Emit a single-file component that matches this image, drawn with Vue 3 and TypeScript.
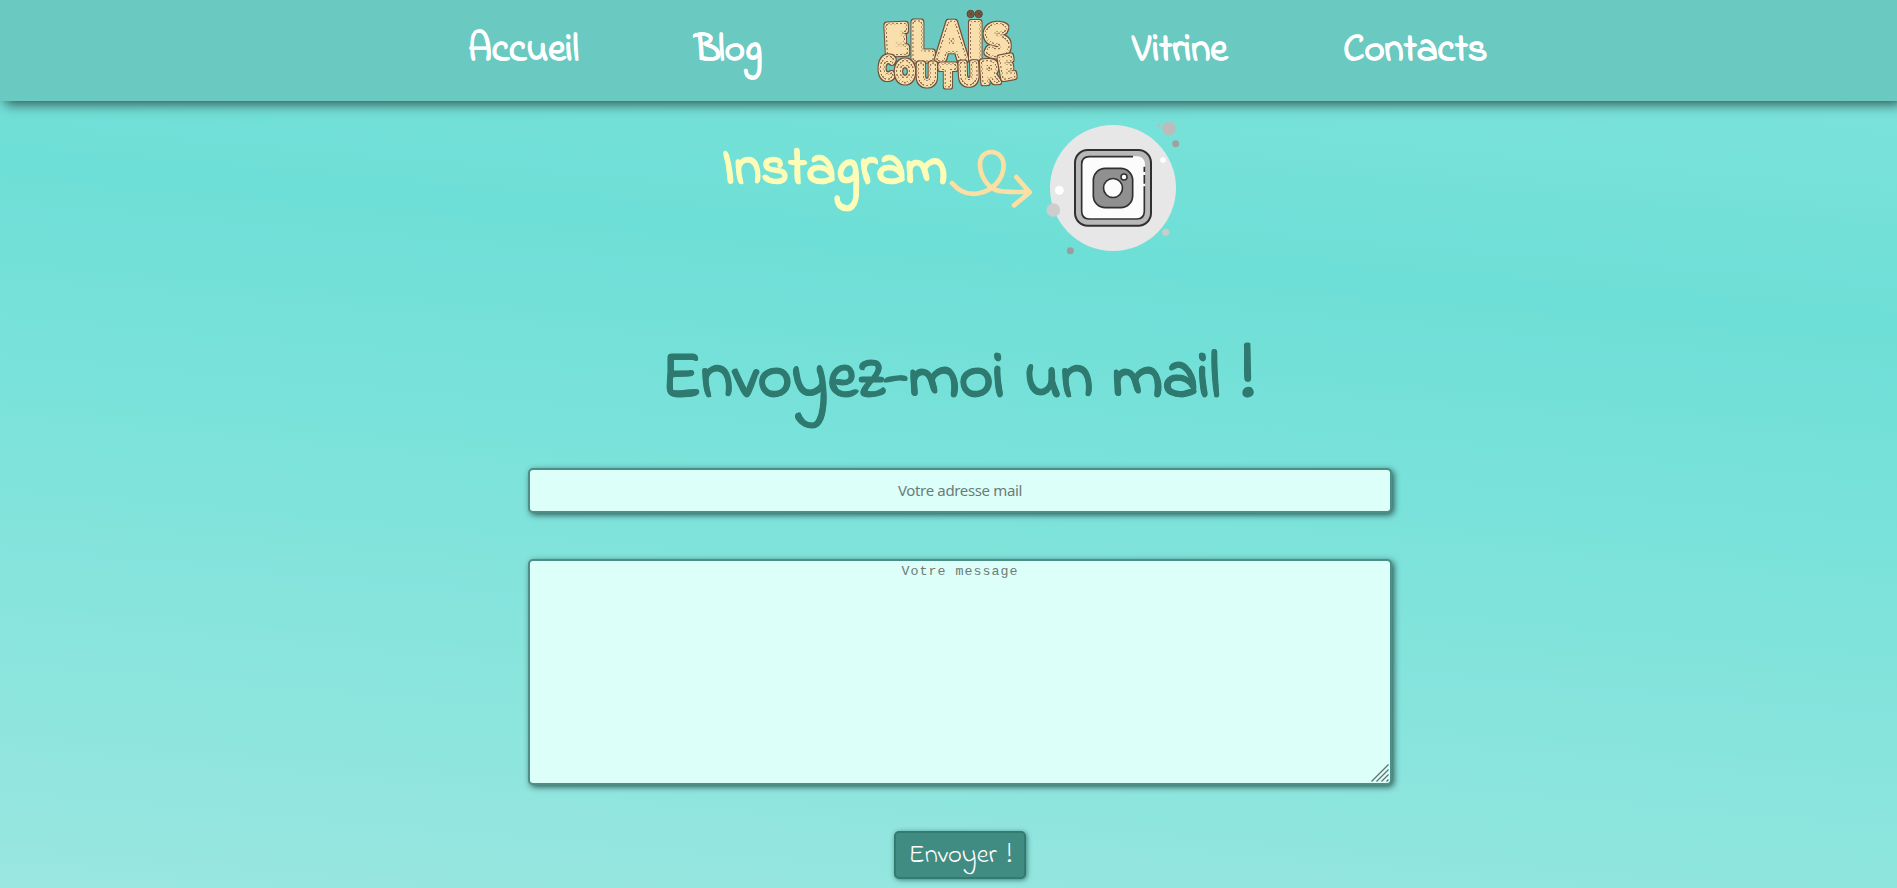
<script setup lang="ts">
interface Letter {
  ch: string
  x: number
  y: number
  w: number
  size: number
  rot: number
  edge: number
}

const leftLinks: string[] = ['Accueil', 'Blog']
const rightLinks: string[] = ['Vitrine', 'Contacts']

const letters: Letter[] = [
  { ch: 'E', x: 106, y: 158, w: 62, size: 112, rot: -3, edge: 21 },
  { ch: 'L', x: 184, y: 178, w: 64, size: 149, rot: 0, edge: 21 },
  { ch: 'A', x: 273, y: 178, w: 82, size: 151, rot: 0, edge: 19 },
  { ch: 'I', x: 344, y: 178, w: 42, size: 149, rot: 0, edge: 18 },
  { ch: 'S', x: 409, y: 165, w: 68, size: 122, rot: -6, edge: 19 },
  { ch: 'C', x: 78, y: 235, w: 42, size: 88, rot: 4, edge: 15 },
  { ch: 'O', x: 133, y: 246, w: 54, size: 86, rot: 0, edge: 15 },
  { ch: 'U', x: 199, y: 255, w: 58, size: 87, rot: 0, edge: 15 },
  { ch: 'T', x: 262, y: 258, w: 46, size: 86, rot: 0, edge: 15 },
  { ch: 'U', x: 324, y: 252, w: 56, size: 87, rot: -2, edge: 15 },
  { ch: 'R', x: 386, y: 247, w: 52, size: 87, rot: -4, edge: 14 },
  { ch: 'E', x: 438, y: 233, w: 42, size: 86, rot: -10, edge: 15 },
]
</script>

<template>
  <div class="page">
    <header class="header">
      <nav class="nav">
        <a v-for="l in leftLinks" :key="l" class="link">{{ l }}</a>
        <a class="link">
          <svg class="logo" width="139" height="101" viewBox="52 0 417 303">
            <defs>
              <filter id="stitched" filterUnits="userSpaceOnUse" x="30" y="0" width="460" height="303" color-interpolation-filters="sRGB">
                <feMorphology in="SourceAlpha" operator="dilate" radius="3" result="grown" />
                <feFlood flood-color="#6e4e39" />
                <feComposite in2="grown" operator="in" result="outline" />
                <feMorphology in="SourceAlpha" operator="erode" radius="3" result="outer" />
                <feMorphology in="SourceAlpha" operator="erode" radius="6" result="inner" />
                <feComposite in="outer" in2="inner" operator="out" result="ring" />
                <feFlood x="52" y="0" width="6" height="6" flood-color="#8a6a50" result="a" />
                <feFlood x="58" y="6" width="6" height="6" flood-color="#8a6a50" result="b" />
                <feMerge x="52" y="0" width="12" height="12">
                  <feMergeNode in="a" />
                  <feMergeNode in="b" />
                </feMerge>
                <feTile />
                <feComposite in2="ring" operator="in" result="stitches" />
                <feMerge>
                  <feMergeNode in="outline" />
                  <feMergeNode in="SourceGraphic" />
                  <feMergeNode in="stitches" />
                </feMerge>
              </filter>
            </defs>
            <g v-for="(l, i) in letters" :key="i" filter="url(#stitched)">
              <text
                :x="l.x"
                :y="l.y"
                :font-size="l.size"
                :stroke-width="l.edge"
                :textLength="l.w"
                lengthAdjust="spacingAndGlyphs"
                :transform="`rotate(${l.rot} ${l.x} ${l.y - l.size * 0.36})`"
              >{{ l.ch }}</text>
            </g>
            <g class="buttons">
              <circle cx="330" cy="42" r="11" />
              <circle cx="354" cy="42" r="11" />
              <path d="M325 37l10 10M335 37l-10 10M349 37l10 10M359 37l-10 10" />
            </g>
          </svg>
        </a>
        <a v-for="l in rightLinks" :key="l" class="link">{{ l }}</a>
      </nav>
    </header>

    <main class="main">
      <section class="social">
        <h2 class="insta-label">Instagram</h2>
        <svg class="arrow" width="83" height="90" viewBox="741 0 249 270">
          <path d="M756 159C777 184 805 196 836 190C880 182 910 146 911 108C911 82 895 66 874 66C852 66 839 83 840 107C842 137 859 168 887 180C913 189 947 185 987 186M949 141L989 187L942 226" />
        </svg>
        <svg class="insta" width="160" height="150" viewBox="0 0 480 450">
          <circle cx="249" cy="234" r="189" fill="#e7e7e7" />
          <circle cx="417" cy="55" r="20.500" fill="#bcbcbc" />
          <circle cx="386" cy="45" r="5.500" fill="#bcbcbc" />
          <circle cx="437" cy="101" r="10.500" fill="#a0a0a0" />
          <circle cx="399" cy="150" r="8.500" fill="#fff" />
          <circle cx="88" cy="241" r="13.500" fill="#fff" />
          <circle cx="70" cy="300" r="20.500" fill="#cdcdcd" />
          <circle cx="407" cy="367" r="10.500" fill="#cbcbcb" />
          <circle cx="121" cy="422" r="10.500" fill="#9c9c9c" />
          <rect x="135" y="120" width="228" height="227" rx="38" fill="#b8b8b8" stroke="#303030" stroke-width="6" />
          <rect x="155" y="139" width="190" height="189" rx="23" fill="#fcfcfc" />
          <path
            d="M309 140H178Q155 140 155 163V304Q155 327 178 327H320Q343 327 343 304V229M343 221V195M343 186V170"
            fill="none" stroke="#303030" stroke-width="5"
          />
          <rect x="190" y="175" width="118" height="118" rx="36" fill="#909090" stroke="#303030" stroke-width="5" />
          <circle cx="249" cy="234" r="28.500" fill="#fcfcfc" stroke="#303030" stroke-width="5" />
          <circle cx="282" cy="201" r="9" fill="#fcfcfc" stroke="#303030" stroke-width="4.500" />
        </svg>
      </section>

      <form class="form" @submit.prevent>
        <h1 class="title">Envoyez-moi un mail <span class="mark">!</span></h1>
        <input class="field mail" type="email" placeholder="Votre adresse mail" />
        <div class="message-box">
          <textarea class="field message" placeholder="Votre message"></textarea>
          <svg class="grip" width="18" height="18">
            <path d="M.5 17.500L17.500.5M5.500 17.500L17.500 5.500M10.500 17.500L17.500 10.500M15.500 17.500L17.500 15.500" />
          </svg>
        </div>
        <button class="send" type="submit">Envoyer !</button>
      </form>
    </main>
  </div>
</template>

<style>
body {
  margin: 0;
  overflow: hidden;
}
</style>

<style scoped>
.page {
  width: 100%;
  height: 888px;
  overflow: hidden;
  background: linear-gradient(185deg, #80e4dd 0%, #6edfd6 31%, #7ae2da 52%, #99e7e0 100%);
  font-family: "Indie Flower", Lato, "Open Sans", sans-serif;
}
svg {
  display: block;
  overflow: visible;
}
.header {
  height: 101px;
  background: #6acac1;
  box-shadow: 5px 3px 12px #2f4f4b;
}
.nav {
  display: flex;
  gap: 115.500px;
  padding-left: 468px;
}
.link {
  flex: none;
  color: #fff;
  cursor: pointer;
  font-size: 38.700px;
  font-weight: 700;
  line-height: 101px;
  height: 101px;
  white-space: nowrap;
  -webkit-text-stroke: 0.3px #fff;
}
.logo text {
  font-family: Lato, sans-serif;
  font-weight: 900;
  text-anchor: middle;
  stroke-linejoin: round;
  fill: #f9dfab;
  stroke: #f9dfab;
  -webkit-text-stroke-color: #f9dfab;
}
.logo {
  -webkit-text-stroke: 0;
}
.buttons {
  fill: #7a5c44;
  stroke: #5c4230;
  stroke-width: 3;
}
.main {
  width: 1920px;
}
.social {
  display: flex;
  padding-left: 722px;
  height: 159px;
}
.insta-label {
  width: 225px;
  margin: 29px 0 0;
  font-size: 53.800px;
  line-height: 80px;
  font-weight: 700;
  color: #fdfdb8;
  white-space: nowrap;
  -webkit-text-stroke: 1px #fdfdb8;
}
.arrow {
  margin-top: 29px;
}
.arrow path {
  fill: none;
  stroke: #fcdfa2;
  stroke-width: 14;
  stroke-linecap: round;
  stroke-linejoin: round;
}
.insta {
  margin-top: 9px;
}
.form {
  display: flex;
  flex-direction: column;
  align-items: center;
  padding-top: 66px;
}
.title {
  height: 110px;
  margin: 0 5px 32px 0;
  font-size: 65px;
  line-height: 110px;
  font-weight: 700;
  word-spacing: 3px;
  color: #2f7a70;
  white-space: nowrap;
  -webkit-text-stroke: 0.8px #2f7a70;
}
.mark {
  margin-left: 3px;
  font-size: 72px;
  line-height: 1;
}
.field {
  box-sizing: border-box;
  display: block;
  width: 864px;
  margin: 0;
  border: 2px solid #4b8f86;
  border-radius: 5px;
  outline: none;
  background: #dcfff9;
  box-shadow: 2px 2px 6px #2f5a55;
  text-align: center;
}
.field::placeholder {
  color: #6b7b78;
  opacity: 1;
}
.mail {
  height: 45px;
  padding: 0 0 2px;
  font: 15px "Noto Sans", sans-serif;
  letter-spacing: -0.35px;
}
.message-box {
  position: relative;
  margin-top: 46px;
}
.message {
  height: 226px;
  padding: 3px 2px 2px;
  resize: none;
  font: 13.333px "Liberation Mono", monospace;
  letter-spacing: 1px;
}
.grip {
  position: absolute;
  right: 3px;
  bottom: 3px;
}
.grip path {
  fill: none;
  stroke: #5f7370;
  stroke-width: 1.3;
}
.send {
  box-sizing: border-box;
  width: 132px;
  height: 48px;
  margin-top: 46px;
  padding: 0;
  border: 2px solid #327b71;
  border-radius: 5px;
  background: #418c82;
  box-shadow: 1px 1px 5px rgba(30, 80, 75, 0.7);
  font-family: inherit;
  font-size: 26.600px;
  word-spacing: 4px;
  color: #fff;
}
</style>
